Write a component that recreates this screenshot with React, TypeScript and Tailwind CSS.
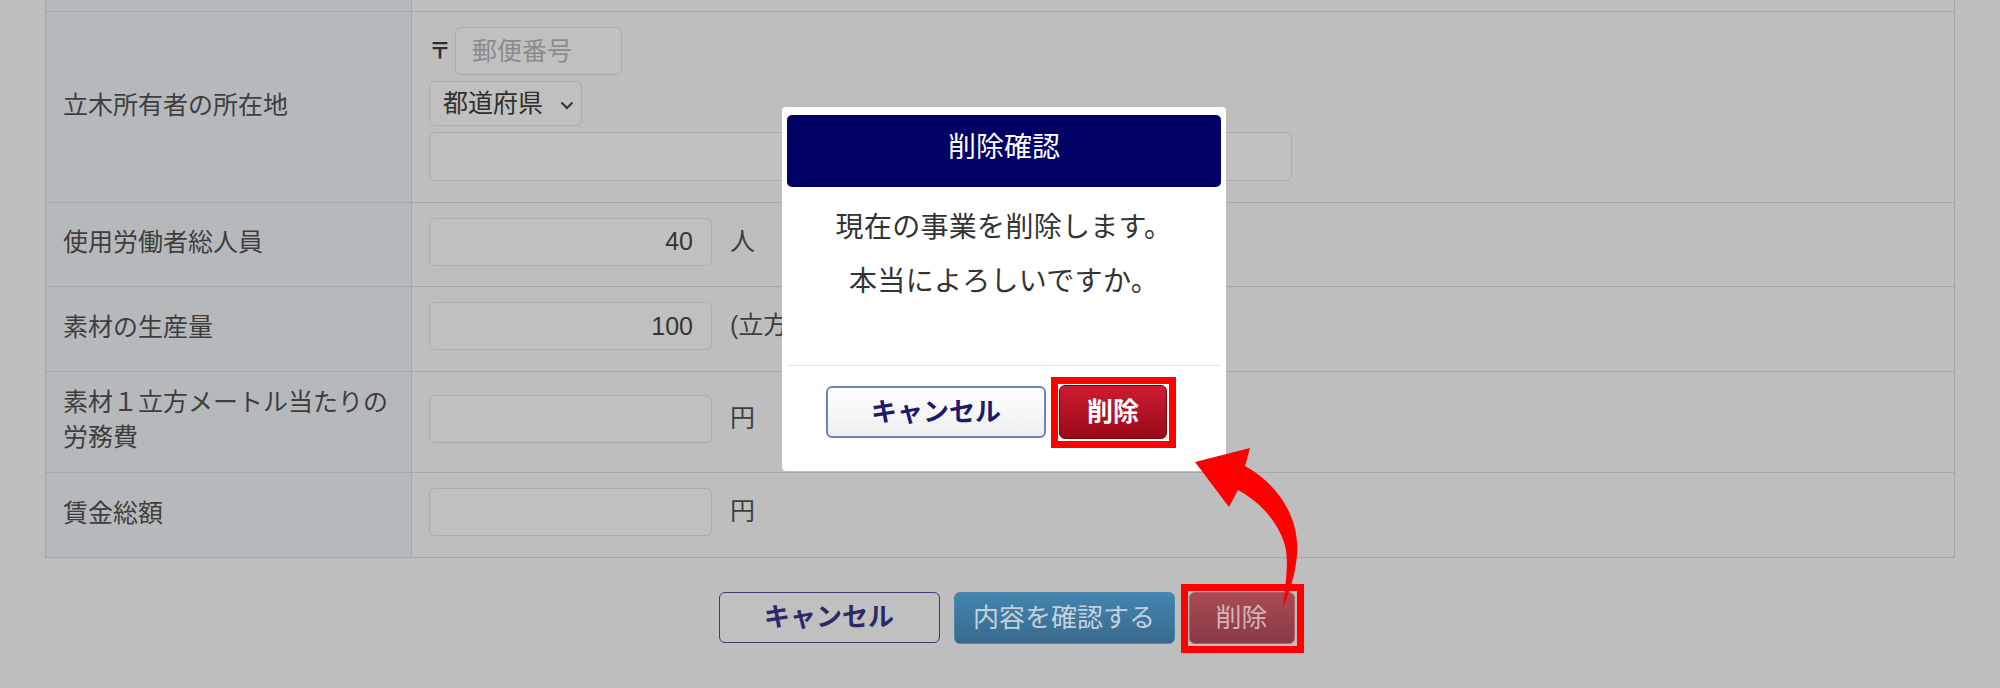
import React from 'react';

const font = "font-['Liberation_Sans','Noto_Sans_CJK_JP',sans-serif]";

function Row({
  label,
  height,
  children,
}: {
  label: React.ReactNode;
  height: string;
  children?: React.ReactNode;
}) {
  return (
    <div className={`grid grid-cols-[366px_1fr] border-b border-[#a6a6a6] ${height}`}>
      <div className="flex items-center border-r border-[#a6a6a6] bg-[#b6b9bc] pb-[4px] pl-[17px] text-[25px] leading-[35px] text-[#3e3e3e]">
        {label}
      </div>
      <div className="flex items-center pb-[6px] pl-[17px]">{children}</div>
    </div>
  );
}

function NumInput({ value, unit }: { value?: string; unit?: string }) {
  return (
    <>
      <input
        readOnly
        value={value ?? ''}
        className="h-[48px] w-[283px] rounded-[6px] border border-[#acacac] bg-[#c0c0c0] pr-[18px] text-right text-[25px] text-[#353535] outline-none"
      />
      {unit && <span className="ml-[18px] whitespace-nowrap text-[25px] text-[#3e3e3e]">{unit}</span>}
    </>
  );
}

// red annotation frame drawn over a button
function Highlight() {
  return (
    <span className="pointer-events-none absolute -bottom-[9px] -left-[8px] -right-[9px] -top-[8px] border-[7px] border-[#ff0000]" />
  );
}

export default function App() {
  return (
    <div className={`relative h-[688px] w-full overflow-hidden bg-[#bebebe] ${font}`}>
      {/* form table */}
      <div className="px-[45px]">
        <div className="border-x border-[#a6a6a6]">
          <Row label="" height="h-[12px]" />

          <Row label="立木所有者の所在地" height="h-[191px]">
            <div className="flex h-full flex-col items-start gap-[6px] pt-[15px]">
              <div className="flex items-center">
                <span className="mr-[4px] text-[22px] font-bold leading-none text-[#2e2e2e]">〒</span>
                <input
                  readOnly
                  placeholder="郵便番号"
                  className="h-[48px] w-[167px] rounded-[6px] border border-[#acacac] bg-[#c0c0c0] pl-[16px] text-[25px] text-[#353535] outline-none placeholder:text-[#8b8b8b]"
                />
              </div>
              <div className="flex h-[45px] w-[153px] items-center rounded-[6px] border border-[#acacac] bg-[#c0c0c0] pl-[13px] text-[25px] text-[#303030]">
                <span>都道府県</span>
                <svg width="14" height="9" viewBox="0 0 14 9" className="ml-[17px] mt-[3px]">
                  <polyline points="1.5,1.5 7,7 12.5,1.5" fill="none" stroke="#333" strokeWidth="2" />
                </svg>
              </div>
              <input
                readOnly
                className="h-[49px] w-[863px] rounded-[6px] border border-[#acacac] bg-[#c0c0c0] outline-none"
              />
            </div>
          </Row>

          <Row label="使用労働者総人員" height="h-[84px]">
            <NumInput value="40" unit="人" />
          </Row>

          <Row label="素材の生産量" height="h-[85px]">
            <NumInput value="100" unit="(立方メートル)" />
          </Row>

          <Row
            label={
              <span>
                素材１立方メートル当たりの
                <br />
                労務費
              </span>
            }
            height="h-[101px]"
          >
            <NumInput unit="円" />
          </Row>

          <Row label="賃金総額" height="h-[85px]">
            <NumInput unit="円" />
          </Row>
        </div>
      </div>

      {/* bottom actions */}
      <div className="mt-[34px] flex items-start justify-center gap-[14px] pl-[13px]">
        <button className="h-[51px] w-[221px] rounded-[6px] border border-[#3d3d6e] bg-[#c0c0c0] text-[26px] font-bold text-[#2a2a69]">
          キャンセル
        </button>
        <button className="h-[52px] w-[221px] rounded-[6px] border border-[#4a87ae] bg-linear-to-b from-[#4385b0] to-[#396a8d] text-[26px] text-[#c3d1dc]">
          内容を確認する
        </button>
        <div className="relative">
          <button className="h-[52px] w-[106px] rounded-[6px] border border-[#b0606a] bg-linear-to-b from-[#a94b57] to-[#893944] text-[26px] text-[#d6b2b6]">
            削除
          </button>
          <Highlight />
        </div>
      </div>

      {/* confirm dialog */}
      <div className="absolute left-[782px] top-[107px] flex h-[364px] w-[444px] flex-col rounded-[4px] bg-white px-[5px] pt-[8px]">
        <div className="flex h-[72px] items-center justify-center rounded-[5px] bg-[#000066] pb-[6px] text-[28px] text-white">
          削除確認
        </div>
        <div className="h-[178px] pt-[14px] text-center text-[28px] leading-[54px] tracking-[0.3px] text-[#333333]">
          <p>現在の事業を削除します。</p>
          <p>本当によろしいですか。</p>
        </div>
        <div className="flex justify-center gap-[13px] border-t border-[#e4e4e4] pr-[15px] pt-[20px]">
          <button className="h-[52px] w-[220px] rounded-[6px] border-2 border-[#7080c4] bg-linear-to-b from-white to-[#eeeeee] text-[26px] font-bold text-[#1b1b6b]">
            キャンセル
          </button>
          <div className="relative -mt-[1px]">
            <button className="h-[54px] w-[108px] rounded-[6px] border border-[#7a0010] bg-linear-to-b from-[#cf1b30] to-[#9a0a18] text-[26px] font-bold text-white">
              削除
            </button>
            <Highlight />
          </div>
        </div>
      </div>

      {/* annotation arrow */}
      <svg
        className="pointer-events-none absolute left-0 top-0"
        width="2000"
        height="688"
        viewBox="0 0 2000 688"
      >
        <path
          d="M1195 462 L1250 448 L1245 466 C1280 485 1300 520 1297 555 C1295 578 1288 595 1283 608 C1285 585 1290 560 1284 542 C1276 520 1260 502 1238 490 L1229 507 Z"
          fill="#ff0000"
        />
      </svg>
    </div>
  );
}
